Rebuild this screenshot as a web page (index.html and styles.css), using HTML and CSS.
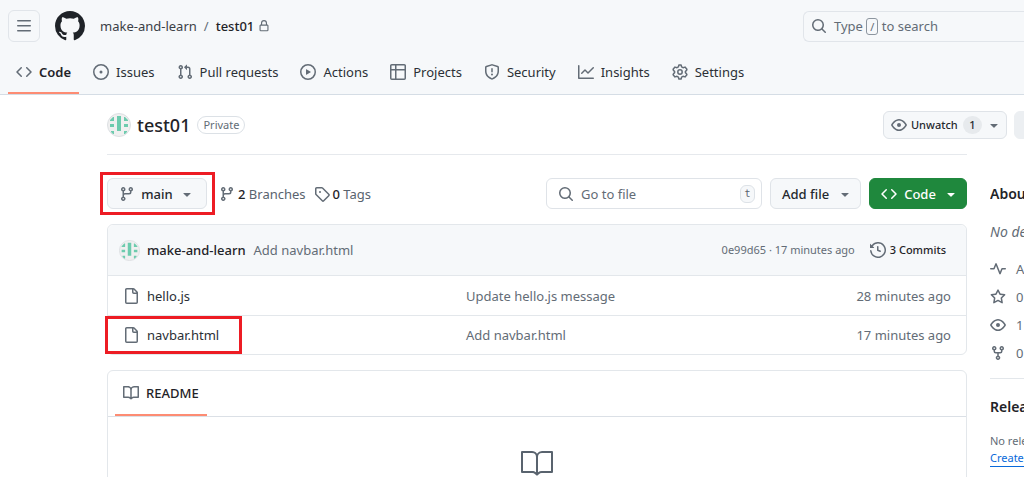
FILE: index.html
```html
<!DOCTYPE html>
<html lang="en">
<head>
<meta charset="utf-8">
<title>make-and-learn/test01</title>
<link rel="stylesheet" href="styles.css">
</head>
<body>
<svg class="sprite" aria-hidden="true">
  <symbol id="i-menu" viewBox="0 0 16 16"><path d="M1 2.75A.75.75 0 0 1 1.75 2h12.5a.75.75 0 0 1 0 1.5H1.75A.75.75 0 0 1 1 2.75Zm0 5A.75.75 0 0 1 1.75 7h12.5a.75.75 0 0 1 0 1.5H1.75A.75.75 0 0 1 1 7.75ZM1.75 12h12.5a.75.75 0 0 1 0 1.5H1.75a.75.75 0 0 1 0-1.5Z"/></symbol>
  <symbol id="i-mark" viewBox="0 0 16 16"><path d="M8 0c4.42 0 8 3.58 8 8a8.013 8.013 0 0 1-5.45 7.59c-.4.08-.55-.17-.55-.38 0-.27.01-1.13.01-2.2 0-.75-.25-1.23-.54-1.48 1.78-.2 3.65-.88 3.65-3.95 0-.88-.31-1.59-.82-2.15.08-.2.36-1.02-.08-2.12 0 0-.67-.22-2.2.82-.64-.18-1.32-.27-2-.27-.68 0-1.36.09-2 .27-1.53-1.03-2.2-.82-2.2-.82-.44 1.1-.16 1.92-.08 2.12-.51.56-.82 1.28-.82 2.15 0 3.06 1.86 3.75 3.64 3.95-.23.2-.44.55-.51 1.07-.46.21-1.61.55-2.33-.66-.15-.24-.6-.83-1.23-.82-.67.01-.27.38.01.53.34.19.73.9.82 1.13.16.45.68 1.31 2.69.94 0 .67.01 1.3.01 1.49 0 .21-.15.45-.55.38A7.995 7.995 0 0 1 0 8c0-4.42 3.58-8 8-8Z"/></symbol>
  <symbol id="i-lock" viewBox="0 0 16 16"><path d="M4 4a4 4 0 0 1 8 0v2h.25c.966 0 1.75.784 1.75 1.75v5.5A1.75 1.75 0 0 1 12.25 15h-8.5A1.75 1.75 0 0 1 2 13.25v-5.5C2 6.784 2.784 6 3.75 6H4Zm8.25 3.5h-8.5a.25.25 0 0 0-.25.25v5.5c0 .138.112.25.25.25h8.5a.25.25 0 0 0 .25-.25v-5.5a.25.25 0 0 0-.25-.25ZM10.5 6V4a2.5 2.5 0 1 0-5 0v2Z"/></symbol>
  <symbol id="i-search" viewBox="0 0 16 16"><path d="M10.68 11.74a6 6 0 0 1-7.922-8.982 6 6 0 0 1 8.982 7.922l3.04 3.04a.749.749 0 0 1-.326 1.275.749.749 0 0 1-.734-.215ZM11.5 7a4.499 4.499 0 1 0-8.997 0A4.499 4.499 0 0 0 11.5 7Z"/></symbol>
  <symbol id="i-code" viewBox="0 0 16 16"><path d="m11.28 3.22 4.25 4.25a.75.75 0 0 1 0 1.06l-4.25 4.25a.749.749 0 0 1-1.275-.326.749.749 0 0 1 .215-.734L13.94 8l-3.72-3.72a.749.749 0 0 1 .326-1.275.749.749 0 0 1 .734.215Zm-6.56 0a.751.751 0 0 1 1.042.018.751.751 0 0 1 .018 1.042L2.06 8l3.72 3.72a.749.749 0 0 1-.326 1.275.749.749 0 0 1-.734-.215L.47 8.53a.75.75 0 0 1 0-1.06Z"/></symbol>
  <symbol id="i-issue" viewBox="0 0 16 16"><path d="M8 9.5a1.5 1.5 0 1 0 0-3 1.5 1.5 0 0 0 0 3Z"/><path d="M8 0a8 8 0 1 1 0 16A8 8 0 0 1 8 0ZM1.5 8a6.5 6.5 0 1 0 13 0 6.5 6.5 0 0 0-13 0Z"/></symbol>
  <symbol id="i-pull" viewBox="0 0 16 16"><path d="M1.5 3.25a2.25 2.25 0 1 1 3 2.122v5.256a2.251 2.251 0 1 1-1.5 0V5.372A2.25 2.25 0 0 1 1.5 3.25Zm5.677-.177L9.573.677A.25.25 0 0 1 10 .854V2.5h1A2.5 2.5 0 0 1 13.5 5v5.628a2.251 2.251 0 1 1-1.5 0V5a1 1 0 0 0-1-1h-1v1.646a.25.25 0 0 1-.427.177L7.177 3.427a.25.25 0 0 1 0-.354ZM3.75 2.5a.75.75 0 1 0 0 1.5.75.75 0 0 0 0-1.5Zm0 9.5a.75.75 0 1 0 0 1.5.75.75 0 0 0 0-1.5Zm8.25.75a.75.75 0 1 0 1.5 0 .75.75 0 0 0-1.5 0Z"/></symbol>
  <symbol id="i-play" viewBox="0 0 16 16"><path d="M8 0a8 8 0 1 1 0 16A8 8 0 0 1 8 0ZM1.5 8a6.5 6.5 0 1 0 13 0 6.5 6.5 0 0 0-13 0Zm4.879-2.773 4.264 2.559a.25.25 0 0 1 0 .428l-4.264 2.559A.25.25 0 0 1 6 10.559V5.442a.25.25 0 0 1 .379-.215Z"/></symbol>
  <symbol id="i-table" viewBox="0 0 16 16"><path d="M0 1.75C0 .784.784 0 1.75 0h12.5C15.216 0 16 .784 16 1.75v12.5A1.75 1.75 0 0 1 14.25 16H1.75A1.75 1.75 0 0 1 0 14.25ZM6.5 6.5v8h7.75a.25.25 0 0 0 .25-.25V6.5Zm8-1.5V1.75a.25.25 0 0 0-.25-.25H6.5V5Zm-13 1.5v7.75c0 .138.112.25.25.25H5v-8ZM5 5V1.5H1.75a.25.25 0 0 0-.25.25V5Z"/></symbol>
  <symbol id="i-shield" viewBox="0 0 16 16"><path d="M7.467.133a1.748 1.748 0 0 1 1.066 0l5.25 1.68A1.75 1.75 0 0 1 15 3.48V7c0 1.566-.32 3.182-1.303 4.682-.983 1.498-2.585 2.813-5.032 3.855a1.697 1.697 0 0 1-1.33 0c-2.447-1.042-4.049-2.357-5.032-3.855C1.32 10.182 1 8.566 1 7V3.48a1.75 1.75 0 0 1 1.217-1.667Zm.61 1.429a.25.25 0 0 0-.153 0l-5.25 1.68a.25.25 0 0 0-.174.238V7c0 1.358.275 2.666 1.057 3.86.784 1.194 2.121 2.34 4.366 3.297a.196.196 0 0 0 .154 0c2.245-.956 3.582-2.104 4.366-3.298C13.225 9.666 13.5 8.36 13.5 7V3.48a.251.251 0 0 0-.174-.237l-5.25-1.68ZM8.75 4.75v3a.75.75 0 0 1-1.5 0v-3a.75.75 0 0 1 1.5 0ZM9 10.5a1 1 0 1 1-2 0 1 1 0 0 1 2 0Z"/></symbol>
  <symbol id="i-graph" viewBox="0 0 16 16"><path d="M1.5 1.75V13.5h13.75a.75.75 0 0 1 0 1.5H.75a.75.75 0 0 1-.75-.75V1.75a.75.75 0 0 1 1.5 0Zm14.28 2.53-5.25 5.25a.75.75 0 0 1-1.06 0L7 7.06 4.28 9.78a.751.751 0 0 1-1.042-.018.751.751 0 0 1-.018-1.042l3.25-3.25a.75.75 0 0 1 1.06 0L10 7.94l4.72-4.72a.751.751 0 0 1 1.042.018.751.751 0 0 1 .018 1.042Z"/></symbol>
  <symbol id="i-gear" viewBox="0 0 16 16"><g fill="none" stroke="currentColor" stroke-width="1.5" stroke-linejoin="round"><path d="M6.9.9h2.2l.5 2 1.4.8 2-.6 1.9 2.1-.4 1.2-1.1 1.1v1.1l1.1 1.1.4 1.1-1.9 2.1-2-.6-1.4.8-.5 2H6.9l-.5-2-1.4-.8-2 .6-1.9-2.1.4-1.100 1.100-1.100V7.500L1.500 6.400l-.4-1.200L3 3.100l2 .6 1.400-.8z"/><circle cx="8" cy="8" r="2.200"/></g></symbol>
  <symbol id="i-eye" viewBox="0 0 16 16"><path d="M8 2c1.981 0 3.671.992 4.933 2.078 1.27 1.091 2.187 2.345 2.637 3.023a1.62 1.62 0 0 1 0 1.798c-.45.678-1.367 1.932-2.637 3.023C11.67 13.008 9.981 14 8 14c-1.981 0-3.671-.992-4.933-2.078C1.797 10.83.88 9.576.43 8.898a1.62 1.62 0 0 1 0-1.798c.45-.677 1.367-1.931 2.637-3.022C4.33 2.992 6.019 2 8 2ZM1.679 7.932a.12.12 0 0 0 0 .136c.411.622 1.241 1.75 2.366 2.717C5.176 11.758 6.527 12.5 8 12.5c1.473 0 2.825-.742 3.955-1.715 1.124-.967 1.954-2.096 2.366-2.717a.12.12 0 0 0 0-.136c-.412-.621-1.242-1.75-2.366-2.717C10.824 4.242 9.473 3.5 8 3.5c-1.473 0-2.825.742-3.955 1.715-1.124.967-1.954 2.096-2.366 2.717ZM8 10a2 2 0 1 1 0-4 2 2 0 0 1 0 4Z"/></symbol>
  <symbol id="i-caret" viewBox="0 0 16 16"><path d="m4.427 7.427 3.396 3.396a.25.25 0 0 0 .354 0l3.396-3.396A.25.25 0 0 0 11.396 7H4.604a.25.25 0 0 0-.177.427Z"/></symbol>
  <symbol id="i-branch" viewBox="0 0 16 16"><path d="M9.5 3.25a2.25 2.25 0 1 1 3 2.122V6A2.5 2.5 0 0 1 10 8.500H6a1 1 0 0 0-1 1v1.128a2.251 2.251 0 1 1-1.500 0V5.372a2.250 2.250 0 1 1 1.500 0v1.836A2.493 2.493 0 0 1 6 7h4a1 1 0 0 0 1-1v-.628A2.250 2.250 0 0 1 9.500 3.250Zm-6 0a.75.75 0 1 0 1.500 0 .75.75 0 0 0-1.500 0Zm8.250-.75a.75.75 0 1 0 0 1.500.75.75 0 0 0 0-1.500ZM4.250 12a.75.75 0 1 0 0 1.500.75.75 0 0 0 0-1.500Z"/></symbol>
  <symbol id="i-tag" viewBox="0 0 16 16"><path d="M1 7.775V2.750C1 1.784 1.784 1 2.750 1h5.025c.464 0 .910.184 1.238.513l6.250 6.250a1.750 1.750 0 0 1 0 2.474l-5.026 5.026a1.750 1.750 0 0 1-2.474 0l-6.250-6.250A1.752 1.752 0 0 1 1 7.775Zm1.500 0c0 .066.026.130.073.177l6.250 6.250a.250.250 0 0 0 .354 0l5.025-5.025a.250.250 0 0 0 0-.354l-6.250-6.250a.250.250 0 0 0-.177-.073H2.750a.250.250 0 0 0-.250.250ZM6 5a1 1 0 1 1 0 2 1 1 0 0 1 0-2Z"/></symbol>
  <symbol id="i-history" viewBox="0 0 16 16"><path d="m.427 1.927 1.215 1.215a8.002 8.002 0 1 1-1.600 5.685.75.75 0 1 1 1.493-.154 6.500 6.500 0 1 0 1.180-4.458l1.358 1.358A.250.250 0 0 1 3.896 6H.250A.250.250 0 0 1 0 5.750V2.104a.250.250 0 0 1 .427-.177ZM7.750 4a.75.75 0 0 1 .75.75v2.992l2.028.812a.75.75 0 0 1-.557 1.392l-2.500-1A.751.751 0 0 1 7 8.250v-3.500A.75.75 0 0 1 7.750 4Z"/></symbol>
  <symbol id="i-file" viewBox="0 0 16 16"><path d="M2 1.750C2 .784 2.784 0 3.750 0h6.586c.464 0 .909.184 1.237.513l2.914 2.914c.329.328.513.773.513 1.237v9.586A1.750 1.750 0 0 1 13.250 16h-9.500A1.750 1.750 0 0 1 2 14.250Zm1.750-.250a.250.250 0 0 0-.250.250v12.500c0 .138.112.250.250.250h9.500a.250.250 0 0 0 .250-.250V6h-2.750A1.750 1.750 0 0 1 9 4.250V1.500Zm6.750.062V4.250c0 .138.112.250.250.250h2.688l-.011-.013-2.914-2.914-.013-.011Z"/></symbol>
  <symbol id="i-book" viewBox="0 0 16 16"><path d="M0 1.750A.75.75 0 0 1 .75 1h4.253c1.227 0 2.317.590 3 1.501A3.743 3.743 0 0 1 11.006 1h4.245a.75.75 0 0 1 .75.75v10.500a.75.75 0 0 1-.75.75h-4.507a2.250 2.250 0 0 0-1.591.659l-.622.621a.75.75 0 0 1-1.060 0l-.622-.621A2.250 2.250 0 0 0 5.258 13H.75a.75.75 0 0 1-.75-.75Zm7.251 10.324.004-5.073-.002-2.253A2.250 2.250 0 0 0 5.003 2.500H1.500v9h3.757a3.750 3.750 0 0 1 1.994.574ZM8.755 4.750l-.004 7.322a3.752 3.752 0 0 1 1.992-.572H14.500v-9h-3.495a2.250 2.250 0 0 0-2.250 2.250Z"/></symbol>
  <symbol id="i-book-large" viewBox="0 0 24 24"><path d="M0 3.750A.75.75 0 0 1 .75 3h7.497c1.566 0 2.945.800 3.751 2.014A4.495 4.495 0 0 1 15.750 3h7.500a.75.75 0 0 1 .75.75v15.063a.752.752 0 0 1-.755.750l-7.682-.052a3 3 0 0 0-2.142.878l-.890.891a.75.75 0 0 1-1.061 0l-.902-.901a2.996 2.996 0 0 0-2.121-.879H.75a.75.75 0 0 1-.75-.75Zm12.750 15.232a4.503 4.503 0 0 1 2.823-.971l6.927.047V4.500h-6.750a3 3 0 0 0-3 3ZM11.247 7.497a3 3 0 0 0-3-2.997H1.500V18h6.947c1.018 0 2.006.346 2.803.980Z"/></symbol>
  <symbol id="i-pulse" viewBox="0 0 16 16"><path d="M6 2c.306 0 .582.187.696.471L10 10.731l1.304-3.260A.751.751 0 0 1 12 7h3.250a.75.75 0 0 1 0 1.500h-2.742l-1.812 4.528a.751.751 0 0 1-1.392 0L6 4.770 4.696 8.030A.75.75 0 0 1 4 8.500H.75a.75.75 0 0 1 0-1.500h2.742l1.812-4.529A.751.751 0 0 1 6 2Z"/></symbol>
  <symbol id="i-star" viewBox="0 0 16 16"><path d="M8 .250a.75.75 0 0 1 .673.418l1.882 3.815 4.210.612a.75.75 0 0 1 .416 1.279l-3.046 2.970.719 4.192a.751.751 0 0 1-1.088.791L8 12.347l-3.766 1.980a.75.75 0 0 1-1.088-.790l.720-4.194L.818 6.374a.75.75 0 0 1 .416-1.280l4.210-.611L7.327.668A.75.75 0 0 1 8 .250Zm0 2.445L6.615 5.500a.75.75 0 0 1-.564.410l-3.097.450 2.240 2.184a.75.75 0 0 1 .216.664l-.528 3.084 2.769-1.456a.75.75 0 0 1 .698 0l2.770 1.456-.530-3.084a.75.75 0 0 1 .216-.664l2.240-2.183-3.096-.450a.75.75 0 0 1-.564-.410L8 2.694Z"/></symbol>
  <symbol id="i-fork" viewBox="0 0 16 16"><path d="M5 5.372v.878c0 .414.336.75.75.75h4.500a.75.75 0 0 0 .75-.75v-.878a2.250 2.250 0 1 1 1.500 0v.878a2.250 2.250 0 0 1-2.250 2.250h-1.500v2.128a2.251 2.251 0 1 1-1.500 0V8.500h-1.500A2.250 2.250 0 0 1 3.500 6.250v-.878a2.250 2.250 0 1 1 1.500 0ZM5 3.250a.75.75 0 1 0-1.500 0 .75.75 0 0 0 1.500 0Zm6.750.75a.75.75 0 1 0 0-1.500.75.75 0 0 0 0 1.500Zm-3 8.750a.75.75 0 1 0-1.500 0 .75.75 0 0 0 1.500 0Z"/></symbol>
  <symbol id="i-identicon" viewBox="0 0 24 24"><circle cx="12" cy="12" r="11.500" fill="#f0f0f0" stroke="#dcdfe2"/><path fill="#6dcbae" d="M10 3h4v15h-4zM6 4h1v4H3V7zM18 4h-1v4h4V7zM3 11h4v3H3zM17 11h4v3h-4zM4 18h3v3H6l-2-2zM20 18h-3v3h1l2-2z"/></symbol>
</svg>

<header class="header">
  <div class="topbar">
    <button class="menu-button" aria-label="Open menu"><svg class="icon"><use href="#i-menu"/></svg></button>
    <a class="mark" href="#" aria-label="Homepage"><svg><use href="#i-mark"/></svg></a>
    <nav class="crumbs" aria-label="Breadcrumb">
      <a href="#">make-and-learn</a><span class="slash">/</span><a class="crumb-current" href="#">test01</a>
      <svg class="lock"><use href="#i-lock"/></svg>
    </nav>
    <button class="search"><svg class="icon"><use href="#i-search"/></svg><span>Type <kbd>/</kbd> to search</span></button>
  </div>
  <nav class="tabs" aria-label="Repository">
    <a class="tab tab-active" href="#"><svg class="icon"><use href="#i-code"/></svg>Code</a>
    <a class="tab" href="#"><svg class="icon"><use href="#i-issue"/></svg>Issues</a>
    <a class="tab" href="#"><svg class="icon"><use href="#i-pull"/></svg>Pull requests</a>
    <a class="tab" href="#"><svg class="icon"><use href="#i-play"/></svg>Actions</a>
    <a class="tab" href="#"><svg class="icon"><use href="#i-table"/></svg>Projects</a>
    <a class="tab" href="#"><svg class="icon"><use href="#i-shield"/></svg>Security</a>
    <a class="tab" href="#"><svg class="icon"><use href="#i-graph"/></svg>Insights</a>
    <a class="tab" href="#"><svg class="icon"><use href="#i-gear"/></svg>Settings</a>
  </nav>
</header>

<div class="page">
  <div class="repo-head">
    <svg class="avatar"><use href="#i-identicon"/></svg>
    <h1>test01</h1>
    <span class="label">Private</span>
    <button class="button watch"><svg class="icon"><use href="#i-eye"/></svg>Unwatch<span class="counter">1</span><svg class="icon"><use href="#i-caret"/></svg></button>
    <button class="button fork" aria-label="Fork"></button>
  </div>

  <div class="columns">
    <main class="content">
      <div class="toolbar">
        <div class="marked marked-branch">
          <button class="button branch"><svg class="icon"><use href="#i-branch"/></svg>main<svg class="icon"><use href="#i-caret"/></svg></button>
        </div>
        <a class="stat" href="#"><svg class="icon"><use href="#i-branch"/></svg><span><b>2</b> Branches</span></a>
        <a class="stat" href="#"><svg class="icon"><use href="#i-tag"/></svg><span><b>0</b> Tags</span></a>
        <div class="file-search">
          <svg class="icon"><use href="#i-search"/></svg>
          <input type="text" placeholder="Go to file" aria-label="Go to file">
          <kbd>t</kbd>
        </div>
        <button class="button add-file">Add file<svg class="icon"><use href="#i-caret"/></svg></button>
        <button class="button code"><svg class="icon"><use href="#i-code"/></svg>Code<svg class="icon"><use href="#i-caret"/></svg></button>
      </div>

      <section class="box">
        <div class="commit">
          <svg class="avatar-small"><use href="#i-identicon"/></svg>
          <a class="author" href="#">make-and-learn</a>
          <a class="message" href="#">Add navbar.html</a>
          <span class="hash">0e99d65 · 17 minutes ago</span>
          <a class="commits" href="#"><svg class="icon"><use href="#i-history"/></svg>3 Commits</a>
        </div>
        <table class="files">
          <tr>
            <td class="name"><a href="#"><svg class="icon"><use href="#i-file"/></svg>hello.js</a></td>
            <td class="note"><a href="#">Update hello.js message</a></td>
            <td class="age">28 minutes ago</td>
          </tr>
          <tr>
            <td class="name"><div class="marked marked-file"><a href="#"><svg class="icon"><use href="#i-file"/></svg>navbar.html</a></div></td>
            <td class="note"><a href="#">Add navbar.html</a></td>
            <td class="age">17 minutes ago</td>
          </tr>
        </table>
      </section>

      <section class="box readme">
        <div class="readme-tabs"><a class="readme-tab" href="#"><svg class="icon"><use href="#i-book"/></svg>README</a></div>
        <div class="readme-body"><svg class="book"><use href="#i-book-large"/></svg></div>
      </section>
    </main>

    <aside class="side">
      <h2>About</h2>
      <p class="about">No description</p>
      <ul>
        <li><svg class="icon"><use href="#i-pulse"/></svg>Activity</li>
        <li><svg class="icon"><use href="#i-star"/></svg>0 stars</li>
        <li><svg class="icon"><use href="#i-eye"/></svg>1 watching</li>
        <li><svg class="icon"><use href="#i-fork"/></svg>0 forks</li>
      </ul>
      <h2 class="releases">Releases</h2>
      <p class="small">No releases published</p>
      <a class="small link" href="#">Create a new release</a>
    </aside>
  </div>
</div>
</body>
</html>
```
FILE: styles.css
```css
*, *::after { box-sizing: border-box; }
html { overflow: hidden; }
body {
  margin: 0;
  overflow: hidden;
  background: #fff;
  color: #1f2328;
  font: 13px/20px "Noto Sans", "Open Sans", sans-serif;
}
a { color: inherit; text-decoration: none; }
button, input { font: inherit; color: inherit; }
h1, h2, p, ul { margin: 0; padding: 0; }
b { color: #1f2328; font-weight: 500; }
svg { display: block; flex: none; fill: currentColor; }
.sprite { position: absolute; width: 0; height: 0; }
.icon { width: 16px; height: 16px; color: #636c76; }

.header { background: #f6f8fa; border-bottom: 1px solid #d5dde5; }
.topbar { display: flex; align-items: center; padding: 10px 0 0 8px; }
.menu-button {
  display: grid;
  place-items: center;
  width: 32px;
  height: 32px;
  padding: 0;
  border: 1px solid #e1e5ea;
  border-radius: 6px;
  background: none;
}
.mark { margin-left: 15px; color: #1f2328; }
.mark svg { width: 30px; height: 30px; }
.crumbs { display: flex; align-items: center; margin-left: 15px; color: #3b4046; }
.slash { margin: 0 7px; color: #636c76; }
.crumb-current { color: #1f2328; font-weight: 500; }
.lock { width: 12px; height: 12px; margin-left: 4px; color: #636c76; }
.search {
  display: flex;
  align-items: center;
  gap: 7px;
  width: 221px;
  height: 31px;
  margin-left: auto;
  padding: 0 7px;
  border: 1px solid #e1e5ea;
  border-right: 0;
  border-radius: 6px 0 0 6px;
  background: none;
  color: #636c76;
}
.search kbd {
  padding: 0 3px;
  border: 1px solid #8c959f;
  border-radius: 3px;
  font: 11px/16px "Noto Sans", sans-serif;
}
.tabs { display: flex; gap: 6px; padding: 8px 8px 0; }
.tab {
  display: flex;
  align-items: center;
  gap: 7px;
  height: 44px;
  padding: 2px 8px 0;
  border-bottom: 2px solid transparent;
  color: #2b3036;
}
.tab-active { border-color: #fd8c73; color: #1f2328; font-weight: 600; }

.page { padding-left: 107px; }
.repo-head {
  display: flex;
  align-items: center;
  height: 60px;
  margin-right: 57px;
  border-bottom: 1px solid #e6e9ed;
}
.avatar { width: 24px; height: 24px; }
.avatar-small { width: 21px; height: 21px; }
h1 { margin-left: 6px; font-size: 18px; line-height: 28px; font-weight: 500; }
.label {
  margin-left: 7px;
  padding: 0 5px;
  border: 1px solid #dce1e6;
  border-radius: 20px;
  color: #636c76;
  font-size: 11px;
  line-height: 16px;
  font-weight: 400;
}
.button {
  display: flex;
  align-items: center;
  flex: none;
  height: 31px;
  border: 1px solid #dfe3e8;
  border-radius: 6px;
  background: #f6f8fa;
  color: #25292e;
  font-weight: 500;
}
.watch { width: 124px; height: 28px; margin-left: auto; padding: 0 4px 0 7px; gap: 4px; font-size: 11px; }
.watch .counter {
  width: 19px;
  margin-left: auto;
  border-radius: 10px;
  background: #e7eaed;
  line-height: 18px;
  text-align: center;
}
.fork { width: 60px; height: 28px; margin-left: 8px; margin-right: -107px; border-color: #eceff2; background: #eceff2; }
.repo-head .fork { margin-right: -107px; }
.repo-head .watch { margin-right: -1px; }

.columns { display: flex; padding-top: 23px; }
.content { flex: 1; min-width: 0; }
.toolbar { display: flex; align-items: center; gap: 8px; }
.marked { position: relative; }
.marked::after { content: ""; position: absolute; border: 3px solid #ed1c24; pointer-events: none; }
.marked-branch { margin-right: 4px; }
.marked-branch::after { inset: -6px -8px -6px -7px; }
.branch { width: 100px; justify-content: space-between; padding: 0 11px; }
.stat { display: flex; align-items: center; gap: 3px; color: #59636e; }
.file-search {
  display: flex;
  align-items: center;
  gap: 7px;
  width: 216px;
  height: 31px;
  margin-left: auto;
  padding: 0 6px 0 11px;
  border: 1px solid #dfe3e8;
  border-radius: 6px;
}
.file-search input { flex: 1; min-width: 0; padding: 0; border: 0; outline: 0; background: none; }
.file-search input::placeholder { color: #636c76; opacity: 1; }
.file-search kbd {
  width: 15px;
  border: 1px solid #dde2e7;
  border-radius: 6px;
  background: #f6f8fa;
  color: #59636e;
  font: 10px/16px "DejaVu Sans Mono", monospace;
  text-align: center;
}
.add-file { width: 91px; justify-content: space-between; padding: 0 7px 0 11px; }
.code { width: 98px; justify-content: space-between; padding: 0 7px 0 11px; border-color: #1f883d; background: #1f883d; color: #fff; }
.code .icon { color: #fff; }

.box { margin-top: 15px; border: 1px solid #e3e7eb; border-radius: 6px; }
.commit {
  display: flex;
  align-items: center;
  height: 51px;
  padding: 0 20px 0 11px;
  border-bottom: 1px solid #e3e7eb;
  border-radius: 6px 6px 0 0;
  background: #f6f8fa;
}
.author { margin-left: 7px; font-weight: 500; }
.message { margin-left: 8px; color: #636c76; }
.hash { margin-left: auto; color: #636c76; font-size: 11px; }
.commits { display: flex; align-items: center; gap: 4px; margin-left: 15px; font-size: 11px; font-weight: 500; }
.files { width: 100%; border-collapse: separate; border-spacing: 0; table-layout: fixed; }
.files td { height: 39px; padding: 0; color: #636c76; }
.files tr + tr td { border-top: 1px solid #e3e7eb; }
.files .name { width: 358px; color: #2b3036; }
.name a { display: flex; align-items: center; gap: 8px; margin-left: 15px; }
.marked-file::after { top: -9px; bottom: -9px; left: -3px; width: 137px; }
.files .age { width: 150px; padding-right: 15px; text-align: right; }

.readme-tabs { padding: 0 7px; border-bottom: 1px solid #dbe0e6; }
.readme-tab {
  display: inline-flex;
  align-items: center;
  gap: 7px;
  height: 45px;
  padding: 0 8px;
  border-bottom: 2px solid #fd8c73;
  vertical-align: top;
  font-weight: 500;
}
.readme-body { display: flex; justify-content: center; padding: 30px 0; }
.book { width: 32px; height: 32px; color: #59636e; }

.side { flex: none; width: 34px; margin-left: 23px; padding-top: 5px; overflow: hidden; white-space: nowrap; color: #636c76; }
h2 { color: #1f2328; font-size: 14px; line-height: 22px; font-weight: 600; }
.about { margin: 16px 0 12px; font-size: 14px; font-style: italic; line-height: 22px; }
.side ul { padding-bottom: 11px; border-bottom: 1px solid #e3e7eb; list-style: none; }
.side li { display: flex; align-items: center; gap: 10px; height: 28px; }
.releases { margin: 17px 0 14px; }
.small { display: block; width: max-content; font-size: 11px; line-height: 18px; }
.link { border-bottom: 1px solid #0969da; color: #0969da; line-height: 16px; }
```
